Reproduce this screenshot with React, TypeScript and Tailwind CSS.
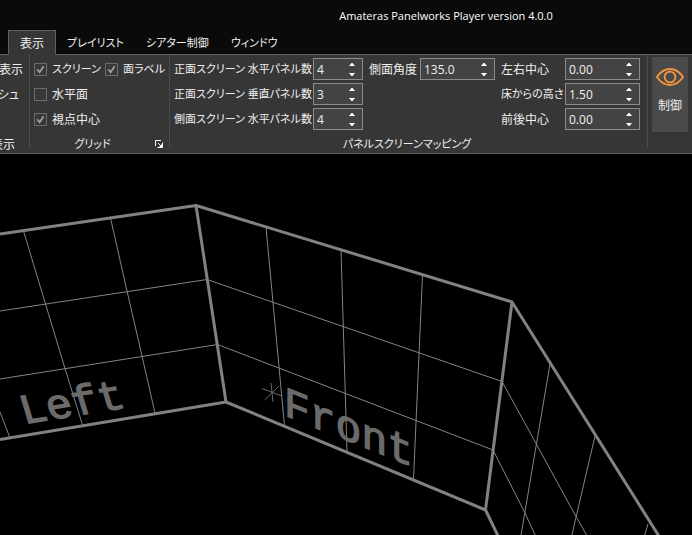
import { useState } from "react";

const TABS = ["表示", "プレイリスト", "シアター制御", "ウィンドウ"] as const;

const FONT = "font-['Open_Sans','Noto_Sans_CJK_JP',sans-serif]";

// Outer frame of the three screens
const EDGES = [
  "M0 234 L196 205.5 L512 302 L662 541",
  "M0 439.5 L226 402 L485.5 510 L500.5 541",
  "M196 205.5 L226 402",
  "M512 302 L485.5 510",
];

// Panel boundaries inside each screen
const PANEL_LINES = [
  // left
  "M0 311 L207 279.5",
  "M0 379 L217.5 344.5",
  "M23.5 231 L45.5 304 L65 368.5 L82.5 425",
  "M110.5 218 L127 291 L142 356 L155 413",
  "M0 412 L10 438",
  // front
  "M207 279.5 L502 381.5",
  "M217.5 344.5 L493 450",
  "M266 227 L284.5 426",
  "M341 250 L347 452",
  "M422.5 275 L413.5 479",
  // right
  "M502 381.5 L536 443.5 L576 516.5 L590 541",
  "M493 450 L524 511 L538 541",
  "M550 364 L520 541",
  "M595 436 L570.5 541",
  "M648 524 L643 541",
];

function Check({ label, initial }: { label: string; initial: boolean }) {
  const [checked, setChecked] = useState(initial);
  return (
    <label className="flex h-[22px] items-center gap-[5px] whitespace-nowrap">
      <span className="relative flex h-[13px] w-[13px] shrink-0">
        <input
          type="checkbox"
          checked={checked}
          onChange={(e) => setChecked(e.target.checked)}
          className="h-[13px] w-[13px] appearance-none border border-[#6c6c6c] bg-[#383838]"
        />
        {checked && (
          <svg viewBox="0 0 13 13" className="pointer-events-none absolute inset-0 h-[13px] w-[13px]">
            <path d="M3.2 6.2 L5.6 9.2 L9.6 3.2" fill="none" stroke="#a2a2a2" strokeWidth="1.7" />
          </svg>
        )}
      </span>
      <span className="pt-px">{label}</span>
    </label>
  );
}

type SpinProps = {
  id: string;
  label: string;
  initial: number;
  digits?: number;
  step?: number;
  labelClass: string;
  boxClass: string;
};

function Spin({ id, label, initial, digits = 0, step = 1, labelClass, boxClass }: SpinProps) {
  const [value, setValue] = useState(initial.toFixed(digits));
  const bump = (d: number) => setValue((v) => (Number(v) + d).toFixed(digits));
  return (
    <div className="flex h-[22px] items-center">
      <label htmlFor={id} className={`shrink-0 whitespace-nowrap pt-px ${labelClass}`}>
        {label}
      </label>
      <div className={`flex h-[22px] shrink-0 border border-[#8b8b8b] bg-[#434343] ${boxClass}`}>
        <input
          id={id}
          value={value}
          onChange={(e) => setValue(e.target.value)}
          className="w-0 min-w-0 flex-1 bg-transparent pl-[3px] pt-px text-[12px] leading-5 text-[#f0f0f0] outline-none"
        />
        <div className="flex w-5 flex-col">
          <button aria-label={`${label} +`} onClick={() => bump(step)} className="flex flex-1 items-center justify-center">
            <svg viewBox="0 0 6 3" className="h-[3px] w-[6px]">
              <path d="M0 3 L2.5 0 H3.5 L6 3 Z" fill="#fff" />
            </svg>
          </button>
          <button aria-label={`${label} -`} onClick={() => bump(-step)} className="flex flex-1 items-center justify-center">
            <svg viewBox="0 0 6 3" className="h-[3px] w-[6px]">
              <path d="M0 0 L2.5 3 H3.5 L6 0 Z" fill="#fff" />
            </svg>
          </button>
        </div>
      </div>
    </div>
  );
}

function Separator() {
  return <div className="mb-[6px] w-px shrink-0 bg-[#4c4c4c]" />;
}

function Scene() {
  return (
    <svg viewBox="0 154 692 381" className="block w-full bg-black">
      <g fill="none" stroke="#858585" strokeWidth="1">
        {PANEL_LINES.map((d) => (
          <path key={d} d={d} />
        ))}
      </g>
      <g fill="none" stroke="#828282" strokeWidth="3" strokeLinejoin="round">
        {EDGES.map((d) => (
          <path key={d} d={d} />
        ))}
      </g>
      {/* view centre marker */}
      <path d="M271 383 L273 402 M262 388.5 L282 396 M264.5 400 L279 386" stroke="#6c6c6c" strokeWidth="1" />
      <g fill="#6b6b6b" stroke="#6b6b6b" strokeWidth="1.3" className="font-['Liberation_Mono',monospace]">
        <text fontSize="43" transform="translate(24 424) skewY(-9) skewX(16)">
          Left
        </text>
        <text fontSize="43" transform="translate(284 415) skewY(22)">
          Front
        </text>
      </g>
    </svg>
  );
}

export default function App() {
  const [tab, setTab] = useState<string>(TABS[0]);

  return (
    <div className={`min-h-screen overflow-hidden bg-black text-[11px] text-[#f0f0f0] ${FONT} [font-feature-settings:'palt']`}>
      {/* Title bar */}
      <header className="flex h-[30px] items-center justify-center bg-[#0a0a0a] pl-[200px] pt-[2px] text-white">
        Amateras Panelworks Player version 4.0.0
      </header>

      {/* Tabs */}
      <nav className="flex h-[24px] bg-[#0a0a0a] pl-2">
        {TABS.map((t) => (
          <button
            key={t}
            onClick={() => setTab(t)}
            className={`whitespace-nowrap border-x border-t pt-px ${
              tab === t ? "relative z-10 -mb-px border-[#606060] bg-[#363636] px-[11px] text-[12px]" : "border-transparent px-[10px]"
            }`}
          >
            {t}
          </button>
        ))}
      </nav>

      {/* Ribbon */}
      <div className="flex h-[100px] border-y border-[#606060] bg-[#363636]">
        <section className="flex w-[29px] shrink-0 flex-col items-end overflow-hidden pt-[3px] text-[12px]">
          <div className="flex h-[22px] items-center whitespace-nowrap pr-[6px] pt-px">表示</div>
          <div className="mt-[3px] flex h-[22px] items-center whitespace-nowrap pr-[10px] pt-px">シュ</div>
          <div className="mt-auto flex h-[18px] items-center whitespace-nowrap pr-[14px] pt-px">表示</div>
        </section>
        <Separator />

        <section className="flex w-[139px] shrink-0 flex-col pl-1 pt-[3px]">
          <div className="flex flex-col gap-[3px]">
            <div className="flex justify-between pr-[4px]">
              <Check label="スクリーン" initial={true} />
              <Check label="面ラベル" initial={true} />
            </div>
            <div className="text-[12px]">
              <Check label="水平面" initial={false} />
            </div>
            <div className="text-[12px]">
              <Check label="視点中心" initial={true} />
            </div>
          </div>
          <div className="mt-auto flex h-[18px] items-center">
            <span className="flex-1 pr-1 pt-px text-center">グリッド</span>
            <button aria-label="グリッド" className="mr-[6px] flex">
              <svg viewBox="0 0 8 8" className="h-2 w-2" fill="none" stroke="#fff">
                <path d="M0.5 6 V0.5 H6" />
                <path d="M3 3 L6 6" />
                <path d="M7.5 2.5 V7.5 H2.5" />
                <path d="M4 7 L7 4 V7 Z" fill="#fff" stroke="none" />
              </svg>
            </button>
          </div>
        </section>
        <Separator />

        <section className="flex shrink-0 flex-col pl-1 pr-[7px] pt-[3px]">
          <div className="flex gap-[6px]">
            <div className="flex flex-col gap-[3px]">
              <Spin id="fh" label="正面スクリーン 水平パネル数" initial={4} labelClass="w-[139px]" boxClass="w-[50px]" />
              <Spin id="fv" label="正面スクリーン 垂直パネル数" initial={3} labelClass="w-[139px]" boxClass="w-[50px]" />
              <Spin id="sh" label="側面スクリーン 水平パネル数" initial={4} labelClass="w-[139px]" boxClass="w-[50px]" />
            </div>
            <Spin id="angle" label="側面角度" initial={135} digits={1} labelClass="w-[51px] text-[12px]" boxClass="w-[75px]" />
            <div className="flex flex-col gap-[3px]">
              <Spin id="lr" label="左右中心" initial={0} digits={2} step={0.1} labelClass="w-[64px] text-[12px]" boxClass="w-[75px]" />
              <Spin id="floor" label="床からの高さ" initial={1.5} digits={2} step={0.1} labelClass="w-[64px]" boxClass="w-[75px]" />
              <Spin id="fb" label="前後中心" initial={0} digits={2} step={0.1} labelClass="w-[64px] text-[12px]" boxClass="w-[75px]" />
            </div>
          </div>
          <div className="mt-auto flex h-[18px] items-center justify-center pt-px">パネルスクリーンマッピング</div>
        </section>
        <Separator />

        <button className="ml-1 mt-[2px] flex h-[75px] w-[36px] shrink-0 flex-col items-center bg-[#4a4a4a] pt-[11px] text-[12px]">
          <svg viewBox="0 0 28 18" className="h-[18px] w-7 shrink-0" fill="none" stroke="#f7963e" strokeWidth="1.8">
            <path d="M0.9 9 C4.5 3.8 9 1 14 1 C19 1 23.5 3.8 27.1 9 C23.5 14.2 19 17 14 17 C9 17 4.5 14.2 0.9 9 Z" />
            <circle cx="14" cy="9" r="5.4" />
          </svg>
          <span className="mt-[11px]">制御</span>
        </button>
      </div>

      <Scene />
    </div>
  );
}
